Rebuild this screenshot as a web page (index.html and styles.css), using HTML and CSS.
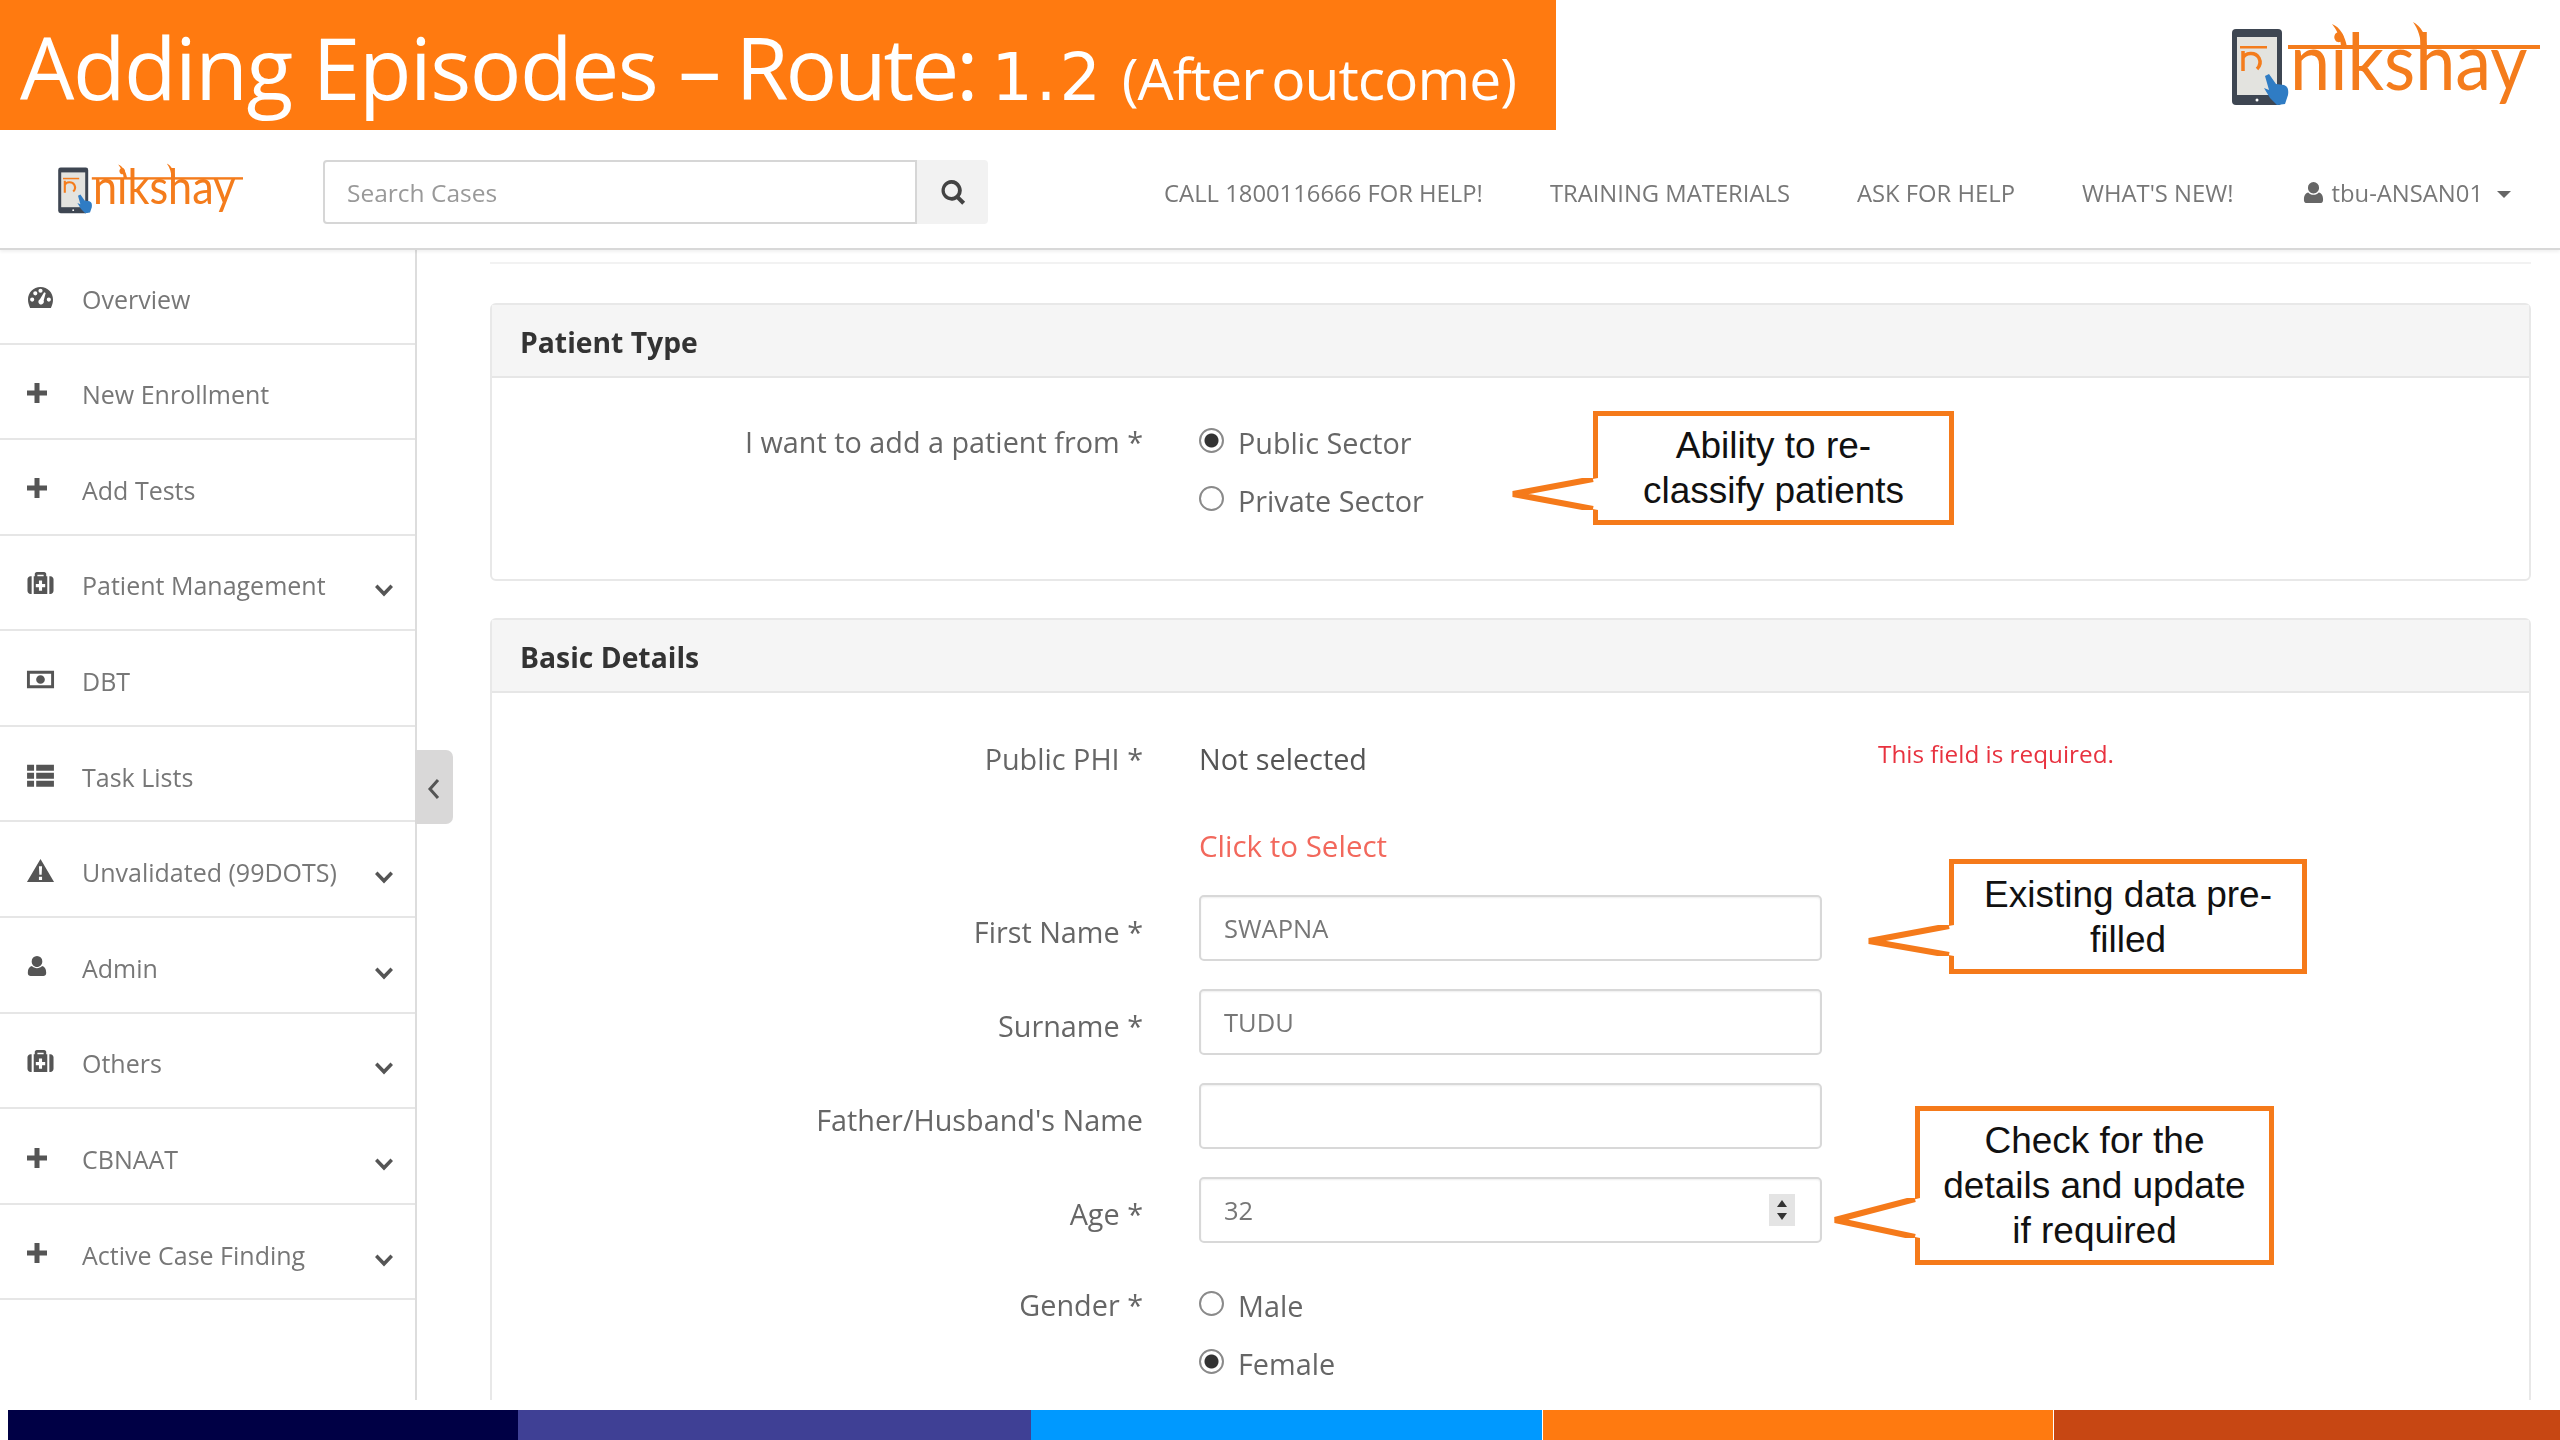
FILE: index.html
```html
<!DOCTYPE html>
<html lang="en">
<head>
<meta charset="utf-8">
<title>Adding Episodes</title>
<link rel="stylesheet" href="styles.css">
</head>
<body>
<svg class="defs" width="0" height="0" aria-hidden="true">
  <symbol id="i-dash" viewBox="0 0 26 24"><path fill-rule="evenodd" d="M13 2C6 2 1 7.500 1 14c0 3 .8 5.500 2 8h20c1.300-2.500 2-5 2-8C25 7.500 20 2 13 2zM5 16a2 2 0 1 1 0-4 2 2 0 0 1 0 4zm3-6a2 2 0 1 1 0-4 2 2 0 0 1 0 4zm5-2.500a2 2 0 1 1 0-4 2 2 0 0 1 0 4zM21 16a2 2 0 1 1 0-4 2 2 0 0 1 0 4zm-6.500 2.500a2.500 2.500 0 0 1-3.500-2.500c0-1 .6-1.700 1.300-2.100L16.500 7l1.500.6-2 7.400c.6.900.2 2.700-1.500 3.500z"/></symbol>
  <symbol id="i-plus" viewBox="0 0 22 22"><path d="M8.500 1h5v7.500H21v5h-7.500V21h-5v-7.500H1v-5h7.500z"/></symbol>
  <symbol id="i-med" viewBox="0 0 27 24"><path fill-rule="evenodd" d="M8 5V3c0-1 .8-2 2-2h7c1.200 0 2 1 2 2v2h1v17H7V5zm2.500 0h6V3.500h-6zM12 9v3.500H9v3h3V19h3v-3.500h3v-3h-3V9zM1 8c0-1.700 1.300-3 3-3h1v17H4c-1.700 0-3-1.300-3-3zm25 0v11c0 1.700-1.300 3-3 3h-1V5h1c1.700 0 3 1.300 3 3z"/></symbol>
  <symbol id="i-money" viewBox="0 0 30 22"><path fill-rule="evenodd" d="M1 2h28v18H1zm3 3v12h22V5zm11 1.500a4.500 4.500 0 1 1 0 9 4.500 4.500 0 0 1 0-9z"/></symbol>
  <symbol id="i-list" viewBox="0 0 27 22"><path d="M1 1h6.500v5.500H1zm8.500 0H26v5.500H9.500zM1 8.500h6.500V14H1zm8.500 0H26V14H9.500zM1 16h6.500v5.500H1zm8.500 0H26v5.500H9.500z"/></symbol>
  <symbol id="i-warn" viewBox="0 0 27 24"><path fill-rule="evenodd" d="M13.500 1 26.500 23H.5zM12 8l.4 8h2.200l.4-8zm0 10v3h3v-3z"/></symbol>
  <symbol id="i-user" viewBox="0 0 22 24"><path d="M11 1a5.800 5.800 0 0 1 5.800 6c0 3.300-2.600 6-5.800 6S5.200 10.300 5.200 7A5.800 5.800 0 0 1 11 1zM5.500 12c1.300 1.500 3.300 2.400 5.500 2.400s4.200-.9 5.500-2.400c3 .5 4.500 3.500 4.500 7v1c0 2-1.500 3-3 3H4c-1.500 0-3-1-3-3v-1c0-3.500 1.500-6.500 4.500-7z"/></symbol>
  <symbol id="i-chev" viewBox="0 0 22 14"><path d="M2 3 4.500.6 11 7.200 17.500.6 20 3l-9 9.500z"/></symbol>
  <symbol id="i-search" viewBox="0 0 24 24"><path fill-rule="evenodd" d="M10.500 1a9.500 9.500 0 0 1 7.700 15.100l5 5-2.700 2.700-5-5A9.500 9.500 0 1 1 10.500 1zm0 3.400a6.100 6.100 0 1 0 0 12.200 6.100 6.100 0 0 0 0-12.200z"/></symbol>
  <symbol id="logo-art" viewBox="0 0 310 100">
    <rect x="2" y="11" width="50" height="76" rx="4" fill="#3e4652"/>
    <rect x="7" y="19" width="40" height="58" fill="#e3e3df"/>
    <rect x="10" y="28" width="27" height="2.500" fill="#f47c1c"/>
    <path d="M13 33v20M13 40c2-5 12-7 16 0 2 4 1 8-2 11" fill="none" stroke="#f47c1c" stroke-width="3.500"/>
    <circle cx="27" cy="82" r="1.500" fill="#fff"/>
    <path d="M35 58l4-2 7 10 8 1c3 1 5 4 4 10l-3 9-8 1-7-7-6-10 5 2z" fill="#2f7cc4"/>
    <rect x="58" y="27" width="252" height="4" fill="#f47c1c"/>
    <path d="M102 6c8 3 13 12 15 23l-6 0c0-8-4-17-9-23zM183 4c8 4 13 13 14 25l-6 0c0-9-3-18-8-25z" fill="#f47c1c"/>
  </symbol>
</svg>

<div class="page">
  <header class="banner">
    <h1 class="title">Adding Episodes – <span class="title-route">Route:</span><span class="title-num">1.2</span><small class="title-sub">(After outcome)</small></h1>
    <div class="logo logo-big">
      <svg class="logo-svg" aria-hidden="true"><use href="#logo-art"/></svg>
      <svg class="logo-svg logo-text" viewBox="0 -12 310 124"><text transform="translate(60 72) scale(.9 1)" class="logo-word">nikshay</text></svg>
    </div>
  </header>

  <div class="topbar">
    <div class="logo logo-small">
      <svg class="logo-svg" aria-hidden="true"><use href="#logo-art"/></svg>
      <svg class="logo-svg logo-text" viewBox="0 -12 310 124"><text transform="translate(60 72) scale(.9 1)" class="logo-word">nikshay</text></svg>
    </div>
    <div class="search">
      <input class="search-input" type="text" placeholder="Search Cases">
      <button class="search-btn" type="button" aria-label="Search"><svg class="icon-search"><use href="#i-search"/></svg></button>
    </div>
    <nav class="nav">
      <a>CALL 1800116666 FOR HELP!</a>
      <a>TRAINING MATERIALS</a>
      <a>ASK FOR HELP</a>
      <a>WHAT'S NEW!</a>
      <a class="nav-user"><svg class="icon-user"><use href="#i-user"/></svg>tbu-ANSAN01<i class="caret"></i></a>
    </nav>
  </div>

  <div class="workspace">
    <aside class="sidebar">
      <a class="item item-first"><svg class="ic"><use href="#i-dash"/></svg><span>Overview</span></a>
      <a class="item"><svg class="ic ic-s"><use href="#i-plus"/></svg><span>New Enrollment</span></a>
      <a class="item"><svg class="ic ic-s"><use href="#i-plus"/></svg><span>Add Tests</span></a>
      <a class="item"><svg class="ic"><use href="#i-med"/></svg><span>Patient Management</span><svg class="chev"><use href="#i-chev"/></svg></a>
      <a class="item"><svg class="ic"><use href="#i-money"/></svg><span>DBT</span></a>
      <a class="item"><svg class="ic"><use href="#i-list"/></svg><span>Task Lists</span></a>
      <a class="item"><svg class="ic"><use href="#i-warn"/></svg><span>Unvalidated (99DOTS)</span><svg class="chev"><use href="#i-chev"/></svg></a>
      <a class="item"><svg class="ic ic-s"><use href="#i-user"/></svg><span>Admin</span><svg class="chev"><use href="#i-chev"/></svg></a>
      <a class="item"><svg class="ic"><use href="#i-med"/></svg><span>Others</span><svg class="chev"><use href="#i-chev"/></svg></a>
      <a class="item"><svg class="ic ic-s"><use href="#i-plus"/></svg><span>CBNAAT</span><svg class="chev"><use href="#i-chev"/></svg></a>
      <a class="item"><svg class="ic ic-s"><use href="#i-plus"/></svg><span>Active Case Finding</span><svg class="chev"><use href="#i-chev"/></svg></a>
      <button class="collapse" type="button" aria-label="Collapse"><svg viewBox="0 0 14 22" class="collapse-ic"><path d="M11 2 3 11l8 9" fill="none" stroke="#555" stroke-width="3"/></svg></button>
    </aside>

    <main class="main">
      <hr class="rule">
      <section class="panel panel-type">
        <h2 class="panel-head">Patient Type</h2>
        <div class="panel-body body-type">
          <div class="row">
            <label class="lbl lbl-radio">I want to add a patient from *</label>
            <div class="radios">
              <label class="radio"><input type="radio" name="sector" checked>Public Sector</label>
              <label class="radio"><input type="radio" name="sector">Private Sector</label>
            </div>
          </div>
        </div>
      </section>

      <section class="panel">
        <h2 class="panel-head">Basic Details</h2>
        <div class="panel-body body-basic">
          <div class="row row-phi">
            <label class="lbl">Public PHI *</label>
            <div class="value">Not selected</div>
            <div class="error">This field is required.</div>
          </div>
          <div class="row row-click">
            <span></span>
            <a class="select-link">Click to Select</a>
          </div>
          <div class="row row-input">
            <label class="lbl">First Name *</label>
            <input class="field" type="text" value="SWAPNA">
          </div>
          <div class="row row-input">
            <label class="lbl">Surname *</label>
            <input class="field" type="text" value="TUDU">
          </div>
          <div class="row row-input">
            <label class="lbl">Father/Husband's Name</label>
            <input class="field" type="text">
          </div>
          <div class="row row-input">
            <label class="lbl">Age *</label>
            <div class="field-wrap">
              <input class="field" type="text" value="32">
              <span class="spinner"><i class="up"></i><i class="down"></i></span>
            </div>
          </div>
          <div class="row row-gender">
            <label class="lbl lbl-radio">Gender *</label>
            <div class="radios">
              <label class="radio"><input type="radio" name="gender">Male</label>
              <label class="radio"><input type="radio" name="gender" checked>Female</label>
            </div>
          </div>
        </div>
      </section>
    </main>
  </div>

  <footer class="stripes">
    <i class="s1"></i><i class="s2"></i><i class="s3"></i><i class="s4"></i><i class="s5"></i>
  </footer>

  <div class="callout c1">
    <svg class="tail t1" viewBox="0 0 90 32"><path d="M90 0 4 16l86 16z" fill="#fff"/><path d="M85 1 5 16l80 15" fill="none" stroke="#f57a1a" stroke-width="6"/></svg>
    Ability to re-<br>classify patients
  </div>
  <div class="callout c2">
    <svg class="tail t2" viewBox="0 0 90 31"><path d="M90 0 4 16l86 15z" fill="#fff"/><path d="M85 1 5 16l80 14" fill="none" stroke="#f57a1a" stroke-width="6"/></svg>
    Existing data pre-<br>filled
  </div>
  <div class="callout c3">
    <svg class="tail t3" viewBox="0 0 90 40"><path d="M90 0 4 22l86 18z" fill="#fff"/><path d="M85 1 5 22l80 17" fill="none" stroke="#f57a1a" stroke-width="6"/></svg>
    Check for the<br>details and update<br>if required
  </div>
</div>
</body>
</html>
```

FILE: styles.css
```css
* { box-sizing: border-box; }
html, body { margin: 0; padding: 0; background: #fff; }
body { font-family: "Open Sans", "Noto Sans", sans-serif; color: #555; }
a { color: inherit; text-decoration: none; }
.defs { position: absolute; }

.page { position: relative; width: 2560px; height: 1440px; overflow: hidden; display: flex; flex-direction: column; filter: blur(.6px); }

/* Slide banner */
.banner { height: 130px; flex: none; display: flex; justify-content: space-between; align-items: flex-start; padding-right: 20px; }
.title { margin: 0; width: 1556px; height: 130px; padding-left: 20px; background: #ff7a10; color: #fff; font-weight: 400; font-size: 86px; line-height: 133px; white-space: nowrap; letter-spacing: -1.5px; }
.title-route { letter-spacing: -3.2px; margin-left: -5px; }
.title-num { font-family: "DejaVu Sans", sans-serif; font-size: 65px; letter-spacing: 3px; margin-left: 16px; }
.title-sub { font-size: 57px; letter-spacing: -1px; word-spacing: -6px; margin-left: 18px; }
.logo { position: relative; flex: none; }
.logo-svg { position: absolute; left: 0; top: 0; width: 100%; height: 100%; }
.logo-text { top: -12%; height: 124%; }
.logo-big { width: 310px; height: 100px; margin-top: 18px; }
.logo-word { font: 400 80px "Lato", sans-serif; fill: #f47c1c; }

/* App top bar */
.topbar { height: 120px; flex: none; display: flex; align-items: center; border-bottom: 2px solid #d8d8d8; box-shadow: 0 2px 3px rgba(0,0,0,.06); position: relative; z-index: 1; background: #fff; padding-right: 49px; }
.logo-small { width: 186px; height: 60px; margin-left: 57px; margin-top: 4px; }
.search { display: flex; margin-left: 80px; height: 64px; margin-top: 6px; flex: none; }
.search-input { width: 594px; height: 64px; border: 2px solid #d6d6d6; border-radius: 4px 0 0 4px; padding: 0 22px; font: 400 24.500px "Open Sans", sans-serif; color: #555; outline: none; }
.search-input::placeholder { color: #999; opacity: 1; }
.search-btn { width: 71px; height: 64px; border: 0; background: #f2f2f2; border-radius: 0 4px 4px 0; padding: 0; display: flex; align-items: center; justify-content: center; }
.icon-search { width: 26px; height: 26px; fill: #444; }
.nav { margin-left: auto; display: flex; gap: 67px; align-items: center; font-size: 23.800px; color: #777; margin-top: 7px; white-space: nowrap; }
.nav-user { display: flex; align-items: center; margin-left: 2px; }
.icon-user { width: 21px; height: 23px; fill: #666; margin-right: 8px; }
.caret { width: 0; height: 0; border: 7px solid transparent; border-top-color: #666; border-bottom: 0; margin-left: 14px; margin-top: 3px; }

/* Workspace */
.workspace { flex: 1; min-height: 0; display: flex; }
.sidebar { position: relative; width: 417px; flex: none; border-right: 2px solid #ddd; }
.item { display: flex; align-items: center; height: 95.600px; padding: 6px 20px 0 26px; border-bottom: 2px solid #e6e6e6; font-size: 25px; color: #777; }
.item-first { height: 94.500px; }
.ic { width: 29px; height: 25px; fill: #555; flex: none; margin-right: 27px; margin-top: -3px; }
.ic-s { width: 22px; margin-right: 34px; height: 22px; margin-top: -3px; }
.chev { width: 22px; height: 14px; fill: #555; margin-left: auto; margin-top: 12px; }
.collapse { position: absolute; left: 415px; top: 500px; width: 38px; height: 74px; border: 0; padding: 0; background: #d9d8d8; border-radius: 0 7px 7px 0; display: flex; align-items: center; justify-content: center; }
.collapse-ic { width: 14px; height: 22px; margin-top: 4px; }

.main { flex: 1; min-width: 0; padding: 12px 29px 0 73px; overflow: hidden; }
.rule { margin: 0 0 39px; border: 0; border-top: 2px solid #f2f2f2; }
.panel { border: 2px solid #e8e8e8; border-radius: 6px; margin-bottom: 37px; }
.panel-type { height: 278px; }
.panel-head { margin: 0; height: 73px; padding-left: 28px; background: #f5f5f5; border-bottom: 2px solid #e6e6e6; font-size: 28.300px; line-height: 74px; font-weight: 700; color: #333; }
.row { display: grid; grid-template-columns: 651px 623px 1fr; column-gap: 56px; font-size: 28.800px; color: #666; }
.lbl { text-align: right; align-self: center; }
.lbl-radio { align-self: start; line-height: 57px; }
.row-input .lbl { padding-top: 7px; }
.body-type { padding-top: 35px; }
.radios { display: flex; flex-direction: column; }
.radio { display: flex; align-items: center; height: 58px; gap: 14px; }
.radio input { appearance: none; margin: -3px 0 0 0; width: 25px; height: 25px; border: 2px solid #8a8a8a; border-radius: 50%; background: #fff; flex: none; }
.radio input:checked { background: radial-gradient(circle, #333 0 6.500px, #fff 7.500px); }

.body-basic { padding: 33px 0 80px; }
.row-phi { height: 64px; align-items: center; }
.value { color: #555; }
.error { font-size: 24.300px; color: #e8323f; margin-top: -10px; }
.row-click { height: 46px; margin-top: 32px; align-items: center; }
.select-link { color: #f2685c; font-size: 29.500px; }
.row-input { margin-top: 28px; }
.row-click + .row-input { margin-top: 27px; }
.field { width: 623px; height: 66px; border: 2px solid #d8d8d8; border-radius: 5px; padding: 0 23px; font: 400 25.500px "Open Sans", sans-serif; color: #777; box-shadow: inset 0 1px 2px rgba(0,0,0,.07); outline: none; display: block; }
.field-wrap { position: relative; }
.spinner { position: absolute; left: 570px; top: 17px; width: 26px; height: 32px; background: #e4e4e4; display: flex; flex-direction: column; justify-content: space-around; align-items: center; padding: 3px 0; }
.up, .down { width: 0; height: 0; border-left: 5px solid transparent; border-right: 5px solid transparent; }
.up { border-bottom: 7px solid #333; }
.down { border-top: 7px solid #333; }
.row-gender { margin-top: 33px; }

/* Footer stripes */
.stripes { height: 30px; margin-top: 10px; flex: none; display: flex; padding-left: 8px; }
.stripes i { display: block; height: 100%; }
.s1 { width: 510px; background: #000045; }
.s2 { width: 513px; background: #3f4095; }
.s3 { width: 511px; background: #0099ff; margin-right: 1px; }
.s4 { width: 510px; background: #ff7a10; margin-right: 1px; }
.s5 { flex: 1; background: #c74713; }

/* Slide annotations */
.callout { position: absolute; display: flex; align-items: center; justify-content: center; text-align: center; background: #fff; border: 5px solid #f57a1a; font: 400 37px/45px "Liberation Sans", sans-serif; color: #111; z-index: 3; }
.c1 { left: 1593px; top: 411px; width: 361px; height: 114px; }
.c2 { left: 1949px; top: 859px; width: 358px; height: 115px; }
.c3 { left: 1915px; top: 1106px; width: 359px; height: 159px; }
.tail { position: absolute; left: -90px; width: 90px; }
.t1 { top: 62px; height: 32px; }
.t2 { top: 61px; height: 31px; }
.t3 { top: 87px; height: 40px; }
```
